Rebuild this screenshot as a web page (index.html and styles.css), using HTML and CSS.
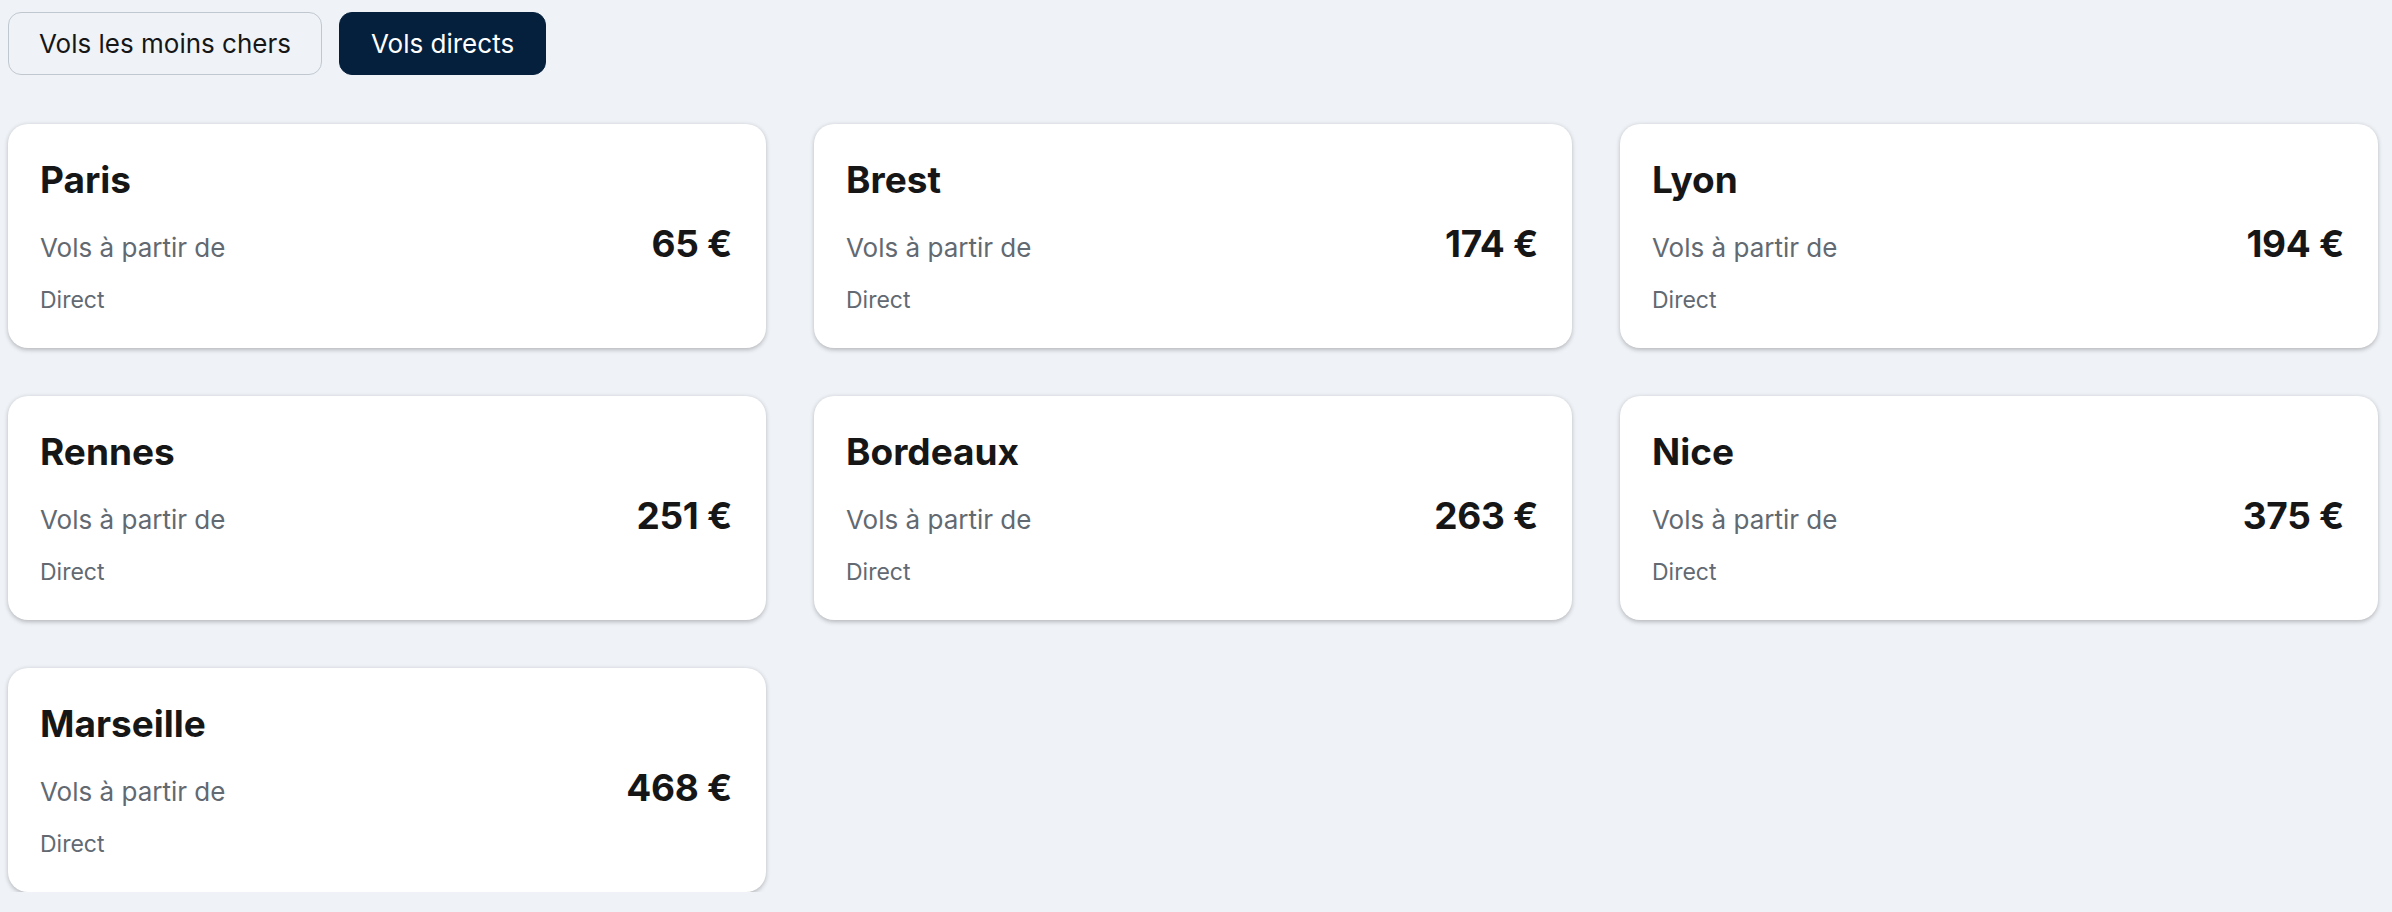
FILE: index.html
```html
<!DOCTYPE html>
<html lang="fr">
<head>
<meta charset="utf-8">
<title>Vols</title>
<link rel="stylesheet" href="styles.css">
</head>
<body>
<div class="page">
  <div class="tabs">
    <button class="tab">Vols les moins chers</button>
    <button class="tab tab-active">Vols directs</button>
  </div>
  <div class="grid">
    <div class="card">
      <div class="city">Paris</div>
      <div class="row"><span class="from">Vols à partir de</span><span class="price">65 €</span></div>
      <div class="type">Direct</div>
    </div>
    <div class="card">
      <div class="city">Brest</div>
      <div class="row"><span class="from">Vols à partir de</span><span class="price">174 €</span></div>
      <div class="type">Direct</div>
    </div>
    <div class="card">
      <div class="city">Lyon</div>
      <div class="row"><span class="from">Vols à partir de</span><span class="price">194 €</span></div>
      <div class="type">Direct</div>
    </div>
    <div class="card">
      <div class="city">Rennes</div>
      <div class="row"><span class="from">Vols à partir de</span><span class="price">251 €</span></div>
      <div class="type">Direct</div>
    </div>
    <div class="card">
      <div class="city">Bordeaux</div>
      <div class="row"><span class="from">Vols à partir de</span><span class="price">263 €</span></div>
      <div class="type">Direct</div>
    </div>
    <div class="card">
      <div class="city">Nice</div>
      <div class="row"><span class="from">Vols à partir de</span><span class="price">375 €</span></div>
      <div class="type">Direct</div>
    </div>
    <div class="card">
      <div class="city">Marseille</div>
      <div class="row"><span class="from">Vols à partir de</span><span class="price">468 €</span></div>
      <div class="type">Direct</div>
    </div>
  </div>
</div>
</body>
</html>
```

FILE: styles.css
```css
html, body {
  margin: 0;
  padding: 0;
  background: #eff3f8;
}

body {
  font-family: Inter, "Liberation Sans", sans-serif;
  color: #161616;
}

.page {
  padding: 12px 0 0 8px;
}

.tabs {
  display: flex;
  gap: 17px;
  margin-bottom: 49px;
}

.tab {
  box-sizing: border-box;
  height: 63px;
  padding: 0 30px;
  border: 1.5px solid #c1c7cf;
  border-radius: 13px;
  background: transparent;
  color: #161616;
  font-family: Inter, "Liberation Sans", sans-serif;
  font-size: 26px;
  font-weight: 400;
  line-height: 1;
  cursor: pointer;
}

.tab-active {
  padding: 0 31px;
  background: #05203c;
  border-color: #05203c;
  color: #ffffff;
}

.grid {
  display: grid;
  grid-template-columns: repeat(3, 758px);
  column-gap: 48px;
  row-gap: 48px;
}

.card {
  box-sizing: border-box;
  height: 224px;
  padding: 34px 34px 0 32px;
  background: #ffffff;
  border-radius: 20px;
  box-shadow: 0 1.5px 4px 0 rgba(37, 32, 31, 0.28);
}

.city {
  font-size: 37px;
  font-weight: 700;
  line-height: 44px;
  color: #161616;
}

.row {
  display: flex;
  justify-content: space-between;
  align-items: baseline;
  margin-top: 20px;
  height: 44px;
}

.from {
  font-size: 26px;
  line-height: 36px;
  color: #626971;
}

.price {
  font-size: 37px;
  font-weight: 700;
  line-height: 44px;
  letter-spacing: -0.3px;
  color: #161616;
}

.type {
  margin-top: 18px;
  font-size: 23px;
  line-height: 32px;
  color: #626971;
}
```
